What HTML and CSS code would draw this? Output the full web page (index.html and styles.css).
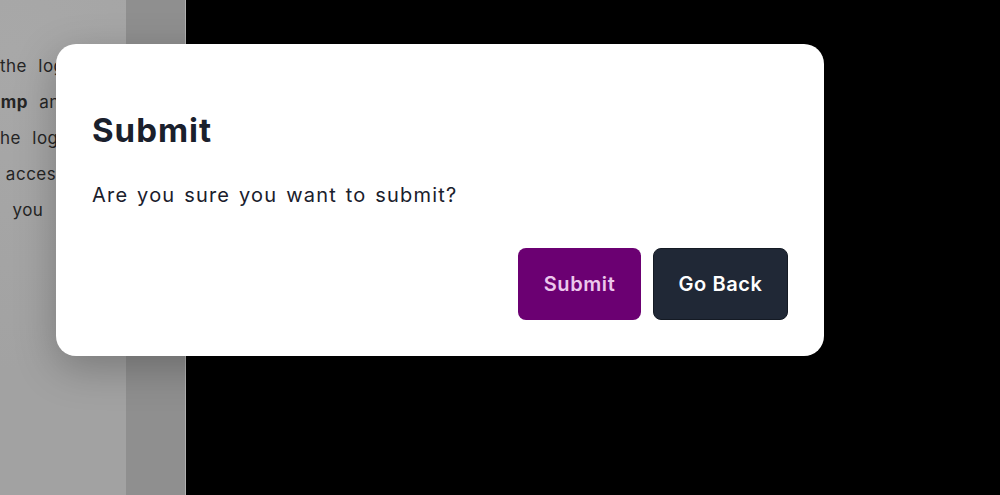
FILE: index.html
```html
<!DOCTYPE html>
<html lang="en">
<head>
<meta charset="utf-8">
<title>Submit</title>
<link rel="stylesheet" href="styles.css">
</head>
<body>
<div class="page">
  <div class="side">
    <div class="side-main">
      <div class="side-text">
        <p class="l1">the login button to</p>
        <p class="l2"><b>Stamp</b> and sign</p>
        <p class="l3">the login page</p>
        <p class="l4">to access your</p>
        <p class="l5">so you want</p>
      </div>
    </div>
    <div class="side-strip"></div>
  </div>
  <div class="stage"></div>
</div>
<div class="modal">
  <h1 class="modal-title">Submit</h1>
  <p class="modal-body">Are you sure you want to submit?</p>
  <div class="modal-actions">
    <button class="btn btn-submit">Submit</button>
    <button class="btn btn-back">Go Back</button>
  </div>
</div>
</body>
</html>
```
FILE: styles.css
```css
* { box-sizing: border-box; }
html, body { margin: 0; height: 100%; }
body {
  background: #000;
  font-family: Inter, "Noto Sans", sans-serif;
  overflow: hidden;
}
.page {
  display: flex;
  height: 495px;
}
.side {
  display: flex;
  width: 186px;
  height: 100%;
}
.side-main {
  width: 126px;
  background: radial-gradient(circle at 10% 10%, #a8a8a8, #a2a2a2 70%);
  overflow: hidden;
}
.side-text {
  padding-top: 53px;
  font-size: 17px;
  color: #252525;
  white-space: nowrap;
}
.side-text p {
  margin: 0;
  height: 36px;
  line-height: 26px;
  letter-spacing: 0.5px;
  word-spacing: 6px;
}
.side-text .l1 { text-indent: 0; }
.side-text .l2 { text-indent: -28px; }
.side-text .l3 { text-indent: -6px; }
.side-text .l4 { text-indent: -22px; }
.side-text .l5 { text-indent: -23px; word-spacing: 10px; }
.side-strip {
  width: 60px;
  background: #8f8f8f;
  border-right: 1px solid #b0b0b0;
}
.stage { flex: 1; background: #000; }

.modal {
  position: absolute;
  left: 56px;
  top: 44px;
  width: 768px;
  height: 312px;
  background: #fff;
  border-radius: 20px;
  padding: 36px;
  box-shadow: 0 12px 40px rgba(0,0,0,0.25);
  display: flex;
  flex-direction: column;
}
.modal-title {
  margin: 30px 0 0;
  font-size: 33px;
  line-height: 40px;
  font-weight: 700;
  letter-spacing: 1px;
  color: #1a202c;
}
.modal-body {
  margin: 30px 0 0;
  font-size: 20px;
  line-height: 30px;
  letter-spacing: 1.2px;
  word-spacing: 2px;
  color: #1a202c;
}
.modal-actions {
  margin-top: auto;
  display: flex;
  justify-content: flex-end;
  gap: 12px;
}
.btn {
  height: 72px;
  padding: 0;
  border-radius: 8px;
  font-family: inherit;
  font-size: 20px;
  font-weight: 600;
  letter-spacing: 0.6px;
  border: 1px solid transparent;
}
.btn-submit {
  width: 123px;
  background: #6b0072;
  color: #ecc7ec;
}
.btn-back {
  width: 135px;
  background: #202836;
  border-color: #141a24;
  color: #fff;
}
```
